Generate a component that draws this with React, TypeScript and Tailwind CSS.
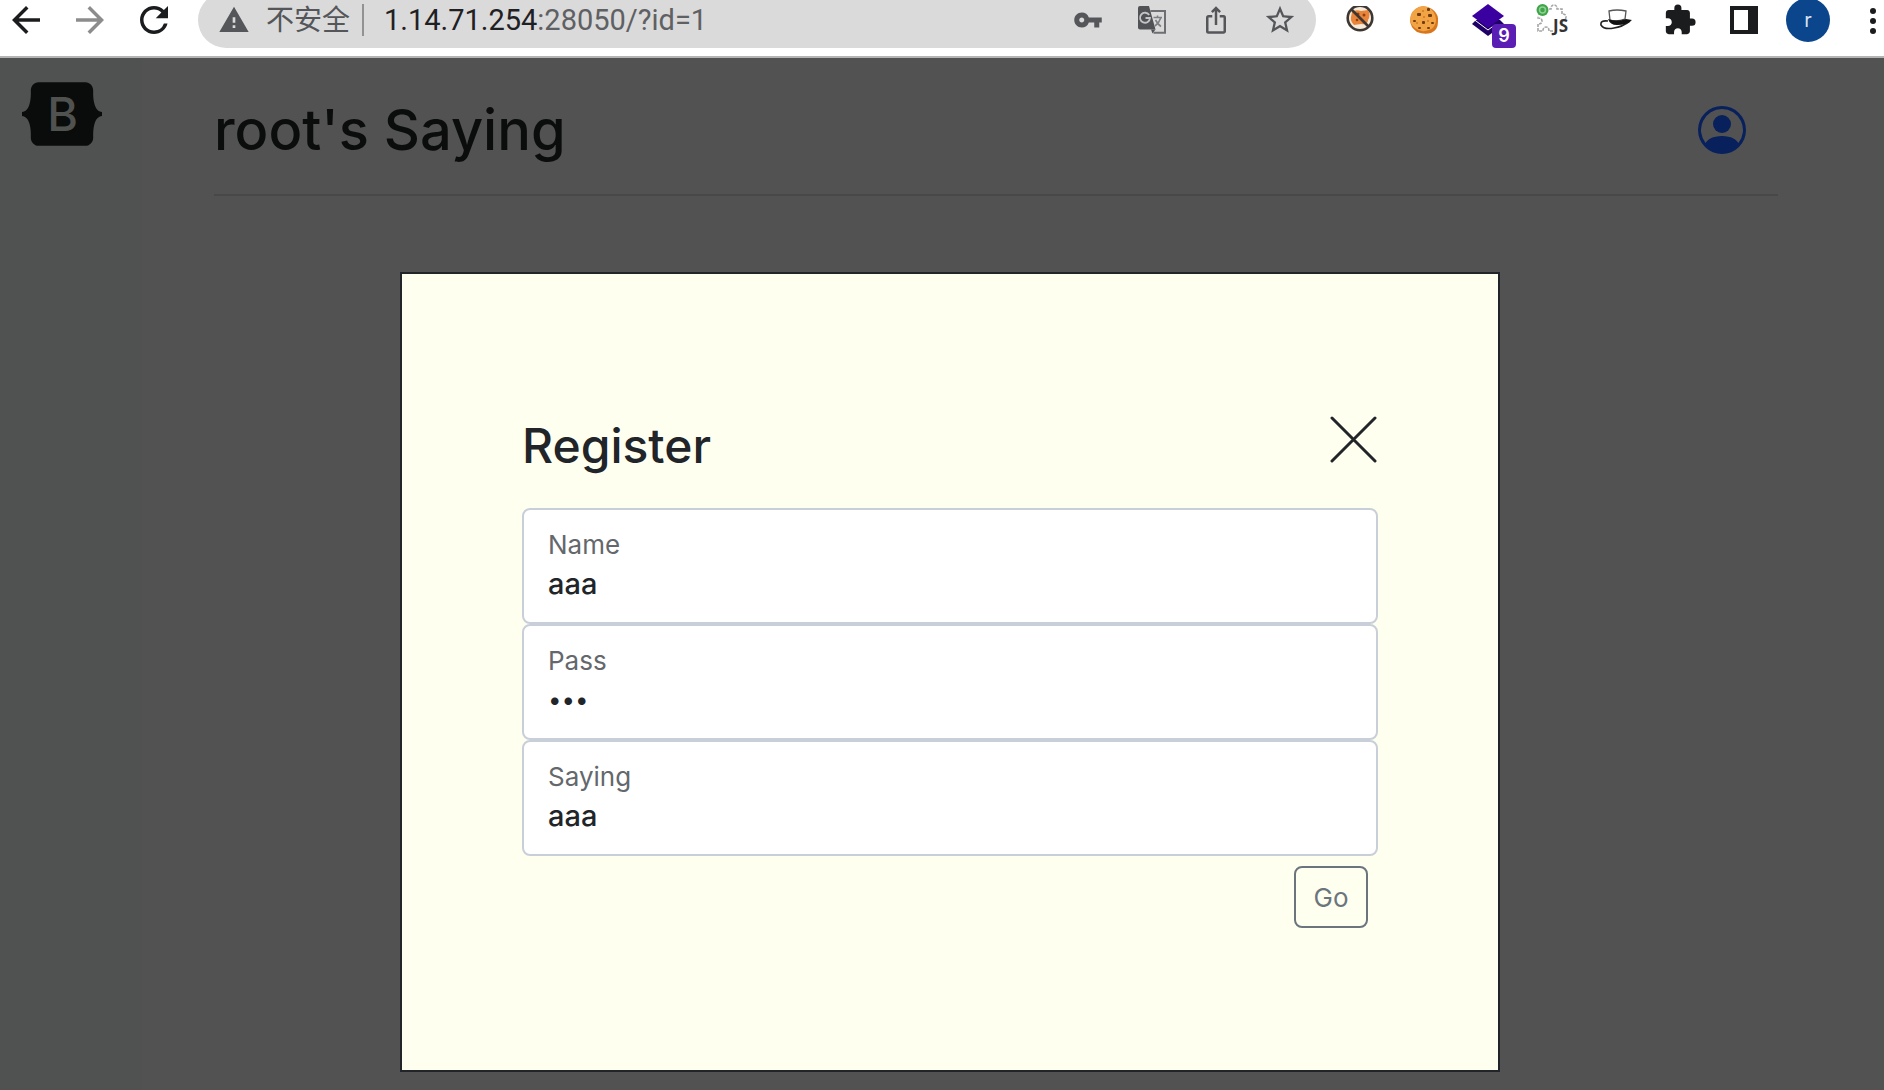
import { useState } from 'react';
import type { ReactNode } from 'react';
import {
  MdArrowBack,
  MdArrowForward,
  MdExtension,
  MdIosShare,
  MdRefresh,
  MdStarBorder,
  MdVpnKey,
  MdWarning,
} from 'react-icons/md';
import { BsPersonCircle } from 'react-icons/bs';

function IconButton({ label, children }: { label: string; children: ReactNode }) {
  return (
    <button type="button" aria-label={label} className="flex h-7 w-7 shrink-0 items-center justify-center">
      {children}
    </button>
  );
}

function TranslateIcon() {
  return (
    <svg viewBox="0 0 28 28" className="h-7 w-7 shrink-0">
      <path d="M12.500 5H27V26.800H15.500" fill="none" stroke="#6d6f72" strokeWidth="2" />
      <path d="M2 0H11L17.500 23.500H2Q0 23.500 0 21.500V2Q0 0 2 0Z" fill="#505255" />
      <path d="M13 23.500H17.500L14.500 27.500Z" fill="#505255" />
      <path d="M11.200 9A5 5 0 1 0 12 12H7.500" fill="none" stroke="#c4c5c6" strokeWidth="1.800" />
      <path d="M15.500 11.500H24M19.500 9.500V11.500M23 11.500Q21 17 17 20M17.500 14Q20 18.500 23 20.500" fill="none" stroke="#7d7f82" strokeWidth="1.600" />
    </svg>
  );
}

function BlockedCookieIcon() {
  return (
    <svg viewBox="0 0 28 28" className="h-7 w-7 shrink-0">
      <circle cx="14" cy="12" r="12.500" fill="#f7ead9" />
      <path d="M6 6Q10 3 15 5L22 4Q25 9 22 14Q22 19 15 18L8 19Q4 15 5 11Z" fill="#e8853b" />
      <circle cx="12" cy="8" r="1.500" fill="#96400e" />
      <circle cx="18" cy="9" r="1.500" fill="#96400e" />
      <circle cx="11" cy="14" r="1.300" fill="#96400e" />
      <circle cx="14" cy="12" r="12.300" fill="none" stroke="#3d3733" strokeWidth="2.600" />
      <path d="M5.500 3.500L22.500 20.500" stroke="#3d3733" strokeWidth="2.600" />
    </svg>
  );
}

function CookieIcon() {
  return (
    <svg viewBox="0 0 28 28" className="h-7 w-7 shrink-0">
      <path d="M9 1Q16-1 22 3Q29 8 28 16Q28 24 21 27Q14 29 7 26Q0 21 0 14Q1 4 9 1Z" fill="#d9761c" />
      <path d="M9 1Q16-1 21 3Q26 8 26 15Q25 22 19 24Q11 27 5 22Q0 18 0 13Q1 4 9 1Z" fill="#f2a444" />
      <g fill="#713b12">
        <rect x="7" y="7" width="4" height="3" rx="1" />
        <rect x="17" y="2" width="3" height="3" rx="1" />
        <rect x="18" y="8" width="4" height="3" rx="1" />
        <rect x="12" y="15" width="3" height="3" rx="1" />
        <rect x="3" y="14" width="3" height="2" rx="1" />
        <rect x="21" y="16" width="3" height="2" rx="1" />
        <rect x="8" y="21" width="3" height="2" rx="1" />
        <rect x="17" y="21" width="3" height="2" rx="1" />
      </g>
      <g fill="#cf7a26">
        <circle cx="13" cy="5" r="1" />
        <circle cx="14" cy="11" r="1" />
        <circle cx="7" cy="17" r="1" />
        <circle cx="18" cy="15" r="1" />
      </g>
    </svg>
  );
}

function LayersIcon() {
  return (
    <span className="relative flex h-8 w-8 shrink-0">
      <svg viewBox="0 0 32 32" className="h-8 w-8">
        <path d="M0 20L4 16L28 16L32 20L16 32Z" fill="#1f0066" />
        <path d="M16 0L32 12L16 24L0 12Z" fill="#3a00a0" />
        <path d="M0 14L16 26L22 21.500" fill="none" stroke="#ffffff" strokeWidth="1" />
      </svg>
      <span className="absolute top-5 left-5 flex h-6 w-6 items-center justify-center rounded-sm bg-[#5a1eb4] text-lg leading-none font-semibold text-white">
        9
      </span>
    </span>
  );
}

function ScriptIcon() {
  return (
    <svg viewBox="0 0 32 32" className="h-8 w-8 shrink-0">
      <path
        d="M13 5H15Q15 1 18 1Q21 1 21 5H26V10Q30 10 30 13Q30 16 26 16V19M17 27H13Q13 23 10 23Q7 23 7 27H2V20Q6 20 6 17Q6 14 2 14V12"
        fill="none"
        stroke="#a5a5a5"
        strokeWidth="1.600"
        strokeDasharray="3 1"
      />
      <circle cx="6.500" cy="6" r="6" fill="#3fa548" />
      <circle cx="6.500" cy="6" r="3" fill="none" stroke="#8fd296" strokeWidth="1.500" />
      <text x="17" y="28" fontSize="17" fontWeight="700" fontFamily="'Open Sans', sans-serif" fill="#333333">
        JS
      </text>
    </svg>
  );
}

function HatIcon() {
  return (
    <svg viewBox="0 0 32 22" className="h-[22px] w-8 shrink-0">
      <path d="M8 12Q0 11 1 16Q4 21 14 19Q22 18 30 12" fill="none" stroke="#222222" strokeWidth="1.600" />
      <path d="M9 2Q17 0 26 2L25 10Q17 13 10 11Z" fill="#ffffff" stroke="#555555" strokeWidth="1.300" />
      <path d="M8 10Q17 13 26 10L32 11Q27 16 17 16Q10 16 8 10Z" fill="#111111" />
    </svg>
  );
}

function BrandLogo() {
  return (
    <svg viewBox="0 0 118 94" className="h-16 w-20" role="img" aria-label="Bootstrap">
      <path
        d="M24.509 0c-6.733 0-11.715 5.893-11.492 12.284.214 6.140-.064 14.092-2.066 20.577C8.943 39.365 5.547 43.485 0 44.014v5.972c5.547.529 8.943 4.649 10.951 11.153 2.002 6.485 2.280 14.437 2.066 20.577C12.794 88.106 17.776 94 24.510 94H93.500c6.733 0 11.714-5.893 11.491-12.284-.214-6.140.064-14.092 2.066-20.577 2.009-6.504 5.396-10.624 10.943-11.153v-5.972c-5.547-.529-8.934-4.649-10.943-11.153-2.002-6.484-2.280-14.437-2.066-20.577C105.214 5.894 100.233 0 93.500 0Z"
        fill="#0a0c0b"
      />
      <text x="60" y="72" textAnchor="middle" fontSize="69" fontWeight="500" fontFamily="Inter, sans-serif" fill="#505250">
        B
      </text>
    </svg>
  );
}

function BrowserBar() {
  return (
    <header className="flex h-[58px] shrink-0 items-center border-b-2 border-[#b4b4b4] bg-white pb-4 pl-3">
      <nav className="flex items-center gap-9 text-[#1b1c1e]">
        <IconButton label="Back">
          <MdArrowBack size={42} className="shrink-0" />
        </IconButton>
        <IconButton label="Forward">
          <MdArrowForward size={42} className="shrink-0 text-[#8c8c8c]" />
        </IconButton>
        <IconButton label="Reload">
          <MdRefresh size={42} className="shrink-0" />
        </IconButton>
      </nav>

      <div className="ml-[30px] flex h-14 min-w-0 flex-1 items-center rounded-full bg-[#dadada] pr-[22px] pl-5 text-[#54565a]">
        <MdWarning size={32} className="shrink-0" />
        <span className="ml-4 shrink-0 text-[28px] leading-8">不安全</span>
        <span className="ml-3 h-8 w-[2px] shrink-0 bg-[#929292]" />
        <p className="ml-5 flex-1 truncate font-[Roboto] text-[29px] leading-8 text-[#5f6063]">
          <span className="text-[#1f2023]">1.14.71.254</span>:28050/?id=1
        </p>
        <div className="flex items-center gap-9">
          <IconButton label="Passwords">
            <MdVpnKey size={30} className="shrink-0" />
          </IconButton>
          <IconButton label="Translate">
            <TranslateIcon />
          </IconButton>
          <IconButton label="Share">
            <MdIosShare size={30} className="shrink-0" />
          </IconButton>
          <IconButton label="Bookmark">
            <MdStarBorder size={34} className="shrink-0" />
          </IconButton>
        </div>
      </div>

      <div className="ml-[30px] flex shrink-0 items-center gap-9 text-[#1b1c1e]">
        <IconButton label="Cookie blocker">
          <BlockedCookieIcon />
        </IconButton>
        <IconButton label="Cookie editor">
          <CookieIcon />
        </IconButton>
        <IconButton label="Layers">
          <LayersIcon />
        </IconButton>
        <IconButton label="Scripts">
          <ScriptIcon />
        </IconButton>
        <IconButton label="Hat">
          <HatIcon />
        </IconButton>
        <IconButton label="Extensions">
          <MdExtension size={34} className="shrink-0" />
        </IconButton>
        <IconButton label="Side panel">
          <svg viewBox="0 0 28 28" className="h-7 w-7 shrink-0">
            <path d="M0 0H28V28H0ZM4 4V24H18V4Z" fill="currentColor" fillRule="evenodd" />
          </svg>
        </IconButton>
        <IconButton label="Profile">
          <span className="flex h-11 w-11 shrink-0 items-center justify-center rounded-full bg-[#0b458c] text-xl leading-none text-[#d5e2f2]">
            r
          </span>
        </IconButton>
        <button type="button" aria-label="Menu" className="flex h-7 w-[26px] justify-end pr-2">
          <svg viewBox="0 0 6 28" className="h-7 w-[6px]">
            <circle cx="3" cy="5" r="3" fill="currentColor" />
            <circle cx="3" cy="15" r="3" fill="currentColor" />
            <circle cx="3" cy="25" r="3" fill="currentColor" />
          </svg>
        </button>
      </div>
    </header>
  );
}

const TEXT_INPUT = 'h-11 w-full bg-transparent text-[29px] font-medium text-[#212529] outline-none';
const PASSWORD_INPUT = 'h-11 w-full bg-transparent text-2xl text-[#212529] outline-none';

const FIELDS = [
  { id: 'name', label: 'Name', type: 'text' },
  { id: 'pass', label: 'Pass', type: 'password' },
  { id: 'saying', label: 'Saying', type: 'text' },
];

function RegisterDialog() {
  const [values, setValues] = useState<Record<string, string>>({ name: 'aaa', pass: 'aaa', saying: 'aaa' });

  return (
    <section
      role="dialog"
      aria-labelledby="register-title"
      className="w-full max-w-[1100px] border-2 border-[#212529] bg-[#fffff0] px-[120px] pt-[138px] pb-[142px]"
    >
      <div className="flex items-center justify-between">
        <h2 id="register-title" className="text-[48px] leading-[68px] font-medium text-[#212529]">
          Register
        </h2>
        <button type="button" aria-label="Close" className="mb-3">
          <svg viewBox="0 0 48 48" className="h-12 w-12">
            <path d="M2 2L45 45M45 2L2 45" stroke="#212529" strokeWidth="3" strokeLinecap="round" />
          </svg>
        </button>
      </div>

      <form className="mt-7" onSubmit={(e) => e.preventDefault()}>
        {FIELDS.map((field) => (
          <div
            key={field.id}
            className="flex h-[116px] flex-col rounded-lg border-2 border-[#c8cfd8] bg-white px-6 pt-[19px]"
          >
            <label htmlFor={field.id} className="text-[26px] leading-8 text-[#64686c]">
              {field.label}
            </label>
            <input
              id={field.id}
              type={field.type}
              value={values[field.id]}
              onChange={(e) => setValues({ ...values, [field.id]: e.target.value })}
              className={field.type === 'password' ? PASSWORD_INPUT : TEXT_INPUT}
            />
          </div>
        ))}
        <div className="flex justify-end pt-[10px] pr-[10px]">
          <button
            type="submit"
            className="h-[62px] w-[74px] rounded-lg border-2 border-[#6c757d] text-[26px] text-[#6c757d]"
          >
            Go
          </button>
        </div>
      </form>
    </section>
  );
}

export default function App() {
  return (
    <div className="flex min-h-screen flex-col overflow-hidden bg-[#525252] font-[Inter,'Noto_Sans_CJK_SC',sans-serif]">
      <BrowserBar />
      <div className="relative flex flex-1">
        <aside className="w-[142px] shrink-0 bg-[#4f5251] pt-6 pl-[22px]">
          <a href="#" className="inline-block">
            <BrandLogo />
          </a>
        </aside>
        <main className="flex-1 pr-[106px] pl-[72px]">
          <div className="flex h-[138px] items-center justify-between border-b-2 border-[#484848] pt-2 pr-8">
            <h1 className="text-[56px] leading-[68px] font-medium text-[#0b0d0c]">root's Saying</h1>
            <button type="button" aria-label="Account" className="text-[#08205c]">
              <BsPersonCircle size={48} />
            </button>
          </div>
        </main>
        <div className="absolute inset-x-0 top-0 flex justify-center pt-[214px] pl-4">
          <RegisterDialog />
        </div>
      </div>
    </div>
  );
}
